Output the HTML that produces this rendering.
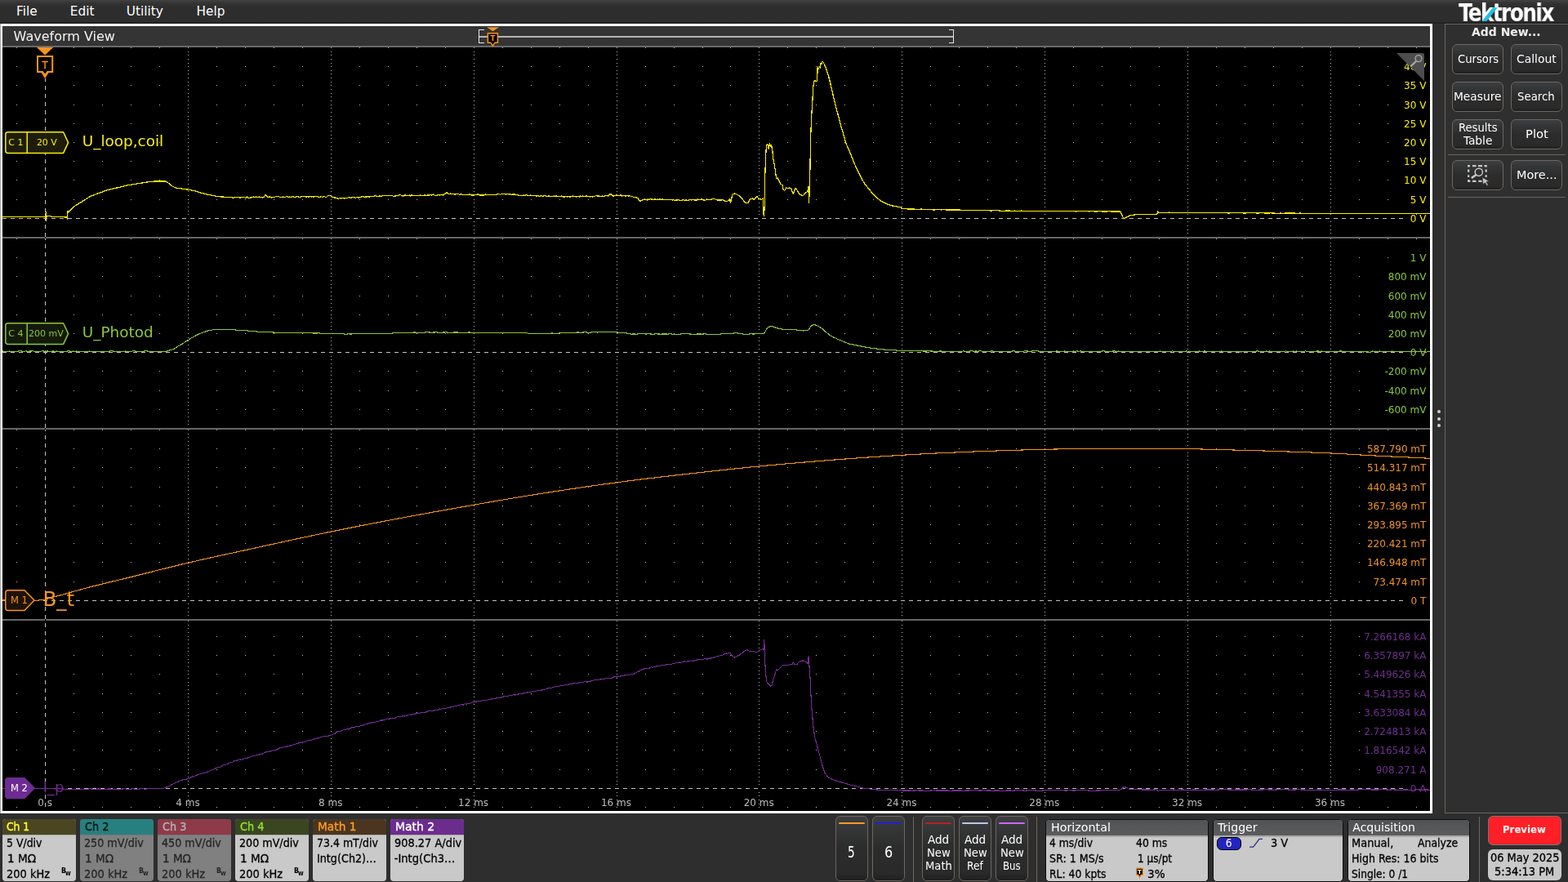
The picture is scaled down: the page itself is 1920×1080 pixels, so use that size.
<!DOCTYPE html>
<html lang="en"><head><meta charset="utf-8"><title>Waveform View</title>
<style>
*{box-sizing:border-box;margin:0;padding:0}
html,body{width:1920px;height:1080px;overflow:hidden;background:#2e2e2e}
body{position:relative;font-family:"DejaVu Sans Condensed","Liberation Sans",sans-serif;color:#fff}
span,b,i{position:absolute;white-space:nowrap;display:block;transform-origin:0 50%;font-style:normal;font-weight:400}
.dv{font-family:"DejaVu Sans","Liberation Sans",sans-serif}
.dvb{font-family:"DejaVu Sans","Liberation Sans",sans-serif;font-weight:700}
.dvcb{font-weight:700}
.lb{font-family:"Liberation Sans","DejaVu Sans",sans-serif}
.lbb{font-family:"Liberation Sans","DejaVu Sans",sans-serif;font-weight:700}
div,nav,header,section,aside,footer,main,button{position:absolute;display:block}
button{border:0;background:none;font:inherit;color:inherit}
#menubar{left:0;top:0;width:1920px;height:29px;background:linear-gradient(#424242 0,#333 4px,#2d2d2d 9px,#2d2d2d 27px,#1c1c1c 28px,#242424 29px)}
#wv{left:0;top:29px;width:1754px;height:967px;border:3px solid #fff;border-left-color:#f4f4f4;background:#000}
#wv:before{content:"";position:absolute;left:-3px;top:-3px;width:1px;height:967px;background:#ababab}
#wvtitle{left:0;top:0;width:1748px;height:26px;background:#343434;border-bottom:2px solid #686a6d}
#plot{left:0;top:0}
#side{left:1769px;top:29px;width:152px;height:967px;border:1px solid #6a6460;background:#2f2f2f}
.btn{border:1px solid #6d6660;border-radius:6px;background:linear-gradient(#3d3e40 0,#343536 22%,#2c2c2c 50%,#2a2a2a 88%,#1f1f1f 100%)}
.sep{background:#6d6660}
#bottom{left:0;top:996px;width:1920px;height:84px;background:#2e2e2e}
  .badge{border-radius:4px;overflow:hidden;background:#c9c9c9}
.badge.off{background:#808080}
.badge header{left:0;top:0;width:100%;height:20px;border-bottom:1px solid #a9a9a9}
.badge.off header{border-bottom-color:#777}
.sys{border:1px solid #0c0c0c;border-radius:5px;overflow:hidden;background:#c9c9c9}
.sys header{left:0;top:0;width:100%;height:21px;background:linear-gradient(#515254,#5b5c5e);border-bottom:2px solid #a9a9a9}
.bar{height:2px;left:3px;right:3px;top:7px;border-radius:1px}
.gs{left:0;top:0;width:100%;height:100%;will-change:transform}
</style></head>
<body>
<nav id="menubar">
<span class="dv" style="left:20px;top:5px;font-size:15.3px;line-height:18px;color:#fff;">File</span>
<span class="dv" style="left:85.8px;top:5px;font-size:15.3px;line-height:18px;color:#fff;">Edit</span>
<span class="dv" style="left:154.8px;top:5px;font-size:15.3px;line-height:18px;color:#fff;">Utility</span>
<span class="dv" style="left:240.6px;top:5px;font-size:15.3px;line-height:18px;color:#fff;">Help</span>
<span class="dvcb" style="left:1786.3px;top:-2px;font-size:30.4px;line-height:35px;color:#fff;transform:scaleX(0.905);letter-spacing:-1.7px;will-change:transform;">Tektronix</span>
<svg width="30" height="30" viewBox="0 0 30 30" style="position:absolute;left:1810px;top:0"><path d="M4.6 26 L18 9.2 L23.8 9.2 L10.4 26Z" fill="#1cc0e8"/></svg>
</nav>
<main id="wv"><div class="gs">
<header id="wvtitle">
<span class="dv" style="left:13.6px;top:2.9px;font-size:16px;line-height:19px;color:#f2f2f2;">Waveform View</span>
<svg width="1748" height="26" viewBox="3 32 1748 26" style="position:absolute;left:0;top:0"><g fill="none" stroke="#e8e8e8" stroke-width="1" shape-rendering="crispEdges"><path d="M592.5 36.5H586.5V52.5H592.5M1161.5 36.5H1167.5V52.5H1161.5"/></g><rect x="587" y="44" width="580" height="2" fill="#b4b4b4"/><path d="M596 33.2H611L603.5 38.2Z" fill="#f7941d"/><path d="M597.4 40.8H609.4V52.2H606L603.4 56.2L600.8 52.2H597.4Z" fill="#000" stroke="#f7941d" stroke-width="1.5"/><text x="603.4" y="50" font-family="DejaVu Sans,Liberation Sans,sans-serif" font-weight="700" font-size="8.6" fill="#f7941d" text-anchor="middle">T</text></svg>
</header>
<svg id="plot" width="1748" height="964" viewBox="3 32 1748 964" style="position:absolute;left:0;top:0;overflow:hidden" font-family="DejaVu Sans,Liberation Sans,sans-serif" font-size="12"><text x="100.8" y="179" font-size="18.4" fill="#f6ee14">U_loop,coil</text><text x="100.8" y="413" font-size="18.4" fill="#8cc63f">U_Photod</text><defs><path id="dr" d="M20 .5h1M55 .5h1M90 .5h1M125 .5h1M160 .5h1M195 .5h1M230 .5h1M265 .5h1M300 .5h1M335 .5h1M370 .5h1M405 .5h1M440 .5h1M475 .5h1M510 .5h1M545 .5h1M580 .5h1M615 .5h1M650 .5h1M685 .5h1M720 .5h1M755 .5h1M790 .5h1M825 .5h1M860 .5h1M894 .5h1M929 .5h1M964 .5h1M999 .5h1M1034 .5h1M1069 .5h1M1104 .5h1M1139 .5h1M1174 .5h1M1209 .5h1M1244 .5h1M1279 .5h1M1314 .5h1M1349 .5h1M1384 .5h1M1419 .5h1M1454 .5h1M1489 .5h1M1524 .5h1M1559 .5h1M1594 .5h1M1629 .5h1M1664 .5h1M1699 .5h1M1734 .5h1"/><path id="dc0" d="M.5 0v1M.5 5v1M.5 9v1M.5 14v1M.5 19v1M.5 23v1M.5 28v1M.5 32v1M.5 37v1M.5 42v1M.5 46v1M.5 51v1M.5 56v1M.5 60v1M.5 65v1M.5 70v1M.5 74v1M.5 79v1M.5 84v1M.5 88v1M.5 93v1M.5 97v1M.5 102v1M.5 107v1M.5 111v1M.5 116v1M.5 121v1M.5 125v1M.5 130v1M.5 135v1M.5 139v1M.5 144v1M.5 148v1M.5 153v1M.5 158v1M.5 162v1M.5 167v1M.5 172v1M.5 176v1M.5 181v1M.5 186v1M.5 190v1M.5 195v1M.5 200v1M.5 204v1M.5 209v1M.5 213v1M.5 218v1M.5 223v1M.5 227v1"/><path id="dc1" d="M.5 0v1M.5 5v1M.5 9v1M.5 14v1M.5 19v1M.5 23v1M.5 28v1M.5 32v1M.5 37v1M.5 42v1M.5 46v1M.5 51v1M.5 56v1M.5 60v1M.5 65v1M.5 70v1M.5 74v1M.5 79v1M.5 84v1M.5 88v1M.5 93v1M.5 97v1M.5 102v1M.5 107v1M.5 111v1M.5 116v1M.5 121v1M.5 125v1M.5 130v1M.5 135v1M.5 139v1M.5 144v1M.5 148v1M.5 153v1M.5 158v1M.5 162v1M.5 167v1M.5 172v1M.5 176v1M.5 181v1M.5 186v1M.5 190v1M.5 195v1M.5 200v1M.5 204v1M.5 209v1M.5 213v1M.5 218v1M.5 223v1M.5 227v1"/><path id="dc2" d="M.5 0v1M.5 5v1M.5 9v1M.5 14v1M.5 19v1M.5 23v1M.5 28v1M.5 32v1M.5 37v1M.5 42v1M.5 46v1M.5 51v1M.5 56v1M.5 60v1M.5 65v1M.5 70v1M.5 74v1M.5 79v1M.5 84v1M.5 88v1M.5 93v1M.5 97v1M.5 102v1M.5 107v1M.5 111v1M.5 116v1M.5 121v1M.5 125v1M.5 130v1M.5 135v1M.5 139v1M.5 144v1M.5 148v1M.5 153v1M.5 158v1M.5 162v1M.5 167v1M.5 172v1M.5 176v1M.5 181v1M.5 186v1M.5 190v1M.5 195v1M.5 200v1M.5 204v1M.5 209v1M.5 213v1M.5 218v1M.5 223v1M.5 227v1"/><path id="dc3" d="M.5 0v1M.5 5v1M.5 9v1M.5 14v1M.5 19v1M.5 23v1M.5 28v1M.5 33v1M.5 37v1M.5 42v1M.5 47v1M.5 51v1M.5 56v1M.5 61v1M.5 65v1M.5 70v1M.5 75v1M.5 79v1M.5 84v1M.5 89v1M.5 93v1M.5 98v1M.5 102v1M.5 107v1M.5 112v1M.5 116v1M.5 121v1M.5 126v1M.5 130v1M.5 135v1M.5 140v1M.5 144v1M.5 149v1M.5 154v1M.5 158v1M.5 163v1M.5 168v1M.5 172v1M.5 177v1M.5 182v1M.5 186v1M.5 191v1M.5 196v1M.5 200v1M.5 205v1M.5 210v1M.5 214v1M.5 219v1M.5 224v1M.5 228v1"/></defs><g stroke="#bcbcbc" stroke-width="1" fill="none" shape-rendering="crispEdges"><use href="#dr" y="58"/><use href="#dr" y="81"/><use href="#dr" y="104"/><use href="#dr" y="128"/><use href="#dr" y="151"/><use href="#dr" y="174"/><use href="#dr" y="197"/><use href="#dr" y="220"/><use href="#dr" y="244"/><use href="#dr" y="267"/><use href="#dr" y="292"/><use href="#dr" y="315"/><use href="#dr" y="338"/><use href="#dr" y="362"/><use href="#dr" y="385"/><use href="#dr" y="408"/><use href="#dr" y="431"/><use href="#dr" y="454"/><use href="#dr" y="478"/><use href="#dr" y="501"/><use href="#dr" y="526"/><use href="#dr" y="549"/><use href="#dr" y="572"/><use href="#dr" y="596"/><use href="#dr" y="619"/><use href="#dr" y="642"/><use href="#dr" y="665"/><use href="#dr" y="688"/><use href="#dr" y="712"/><use href="#dr" y="735"/><use href="#dr" y="779"/><use href="#dr" y="802"/><use href="#dr" y="825"/><use href="#dr" y="849"/><use href="#dr" y="872"/><use href="#dr" y="895"/><use href="#dr" y="918"/><use href="#dr" y="942"/><use href="#dr" y="965"/><use href="#dr" y="988"/><use href="#dc0" x="230" y="58"/><use href="#dc1" x="230" y="292"/><use href="#dc2" x="230" y="526"/><use href="#dc3" x="230" y="760"/><use href="#dc0" x="405" y="58"/><use href="#dc1" x="405" y="292"/><use href="#dc2" x="405" y="526"/><use href="#dc3" x="405" y="760"/><use href="#dc0" x="580" y="58"/><use href="#dc1" x="580" y="292"/><use href="#dc2" x="580" y="526"/><use href="#dc3" x="580" y="760"/><use href="#dc0" x="755" y="58"/><use href="#dc1" x="755" y="292"/><use href="#dc2" x="755" y="526"/><use href="#dc3" x="755" y="760"/><use href="#dc0" x="929" y="58"/><use href="#dc1" x="929" y="292"/><use href="#dc2" x="929" y="526"/><use href="#dc3" x="929" y="760"/><use href="#dc0" x="1104" y="58"/><use href="#dc1" x="1104" y="292"/><use href="#dc2" x="1104" y="526"/><use href="#dc3" x="1104" y="760"/><use href="#dc0" x="1279" y="58"/><use href="#dc1" x="1279" y="292"/><use href="#dc2" x="1279" y="526"/><use href="#dc3" x="1279" y="760"/><use href="#dc0" x="1454" y="58"/><use href="#dc1" x="1454" y="292"/><use href="#dc2" x="1454" y="526"/><use href="#dc3" x="1454" y="760"/><use href="#dc0" x="1629" y="58"/><use href="#dc1" x="1629" y="292"/><use href="#dc2" x="1629" y="526"/><use href="#dc3" x="1629" y="760"/></g><rect x="3" y="290" width="1748" height="2" fill="#666"/><rect x="3" y="524" width="1748" height="2" fill="#666"/><rect x="3" y="758" width="1748" height="2" fill="#666"/><path d="M55.5 95V993M3 267.5H1718M3 431.5H1718M3 735.5H1718M3 965.5H1718" stroke="#000" stroke-width="1" fill="none" shape-rendering="crispEdges"/><path d="M3 267.5H1718M3 431.5H1718M3 735.5H1718M3 965.5H1718" stroke="#c4c4c4" stroke-width="1" stroke-dasharray="5 5" fill="none" shape-rendering="crispEdges"/><path d="M55.5 96V100M55.5 105V110M55.5 115V120M55.5 125V130M55.5 135V140M55.5 145V150M55.5 155V160M55.5 165V170M55.5 175V180M55.5 185V190M55.5 195V200M55.5 205V210M55.5 215V220M55.5 225V230M55.5 235V240M55.5 245V250M55.5 255V260M55.5 265V270M55.5 275V280M55.5 285V290M55.5 292V294M55.5 299V304M55.5 309V314M55.5 319V324M55.5 329V334M55.5 339V344M55.5 349V354M55.5 359V364M55.5 369V374M55.5 379V384M55.5 389V394M55.5 399V404M55.5 409V414M55.5 419V424M55.5 429V434M55.5 439V444M55.5 449V454M55.5 459V464M55.5 469V474M55.5 479V484M55.5 489V494M55.5 499V504M55.5 509V514M55.5 519V524M55.5 526V528M55.5 533V538M55.5 543V548M55.5 553V558M55.5 563V568M55.5 573V578M55.5 583V588M55.5 593V598M55.5 603V608M55.5 613V618M55.5 623V628M55.5 633V638M55.5 643V648M55.5 653V658M55.5 663V668M55.5 673V678M55.5 683V688M55.5 693V698M55.5 703V708M55.5 713V718M55.5 723V728M55.5 733V738M55.5 743V748M55.5 753V758M55.5 763V768M55.5 773V778M55.5 783V788M55.5 793V798M55.5 803V808M55.5 813V818M55.5 823V828M55.5 833V838M55.5 843V848M55.5 853V858M55.5 863V868M55.5 873V878M55.5 883V888M55.5 893V898M55.5 903V908M55.5 913V918M55.5 923V928M55.5 933V938M55.5 943V948M55.5 953V958M55.5 963V968M55.5 973V978M55.5 983V988" stroke="#c4c4c4" stroke-width="1" fill="none" shape-rendering="crispEdges"/><text x="52.4" y="742" font-size="24.6" fill="#f7941d">B_t</text><text x="52.8" y="970" font-size="18" fill="#6d2a90">I_p</text><path fill="#000" d="M1715.11 74H1751V89H1715.11ZM1715.11 97H1751V112H1715.11ZM1715.11 121H1751V136H1715.11ZM1715.11 144H1751V159H1715.11ZM1715.11 167H1751V182H1715.11ZM1715.11 190H1751V205H1715.11ZM1715.11 213H1751V228H1715.11ZM1722.74 237H1751V252H1722.74ZM1722.74 260H1751V275H1722.74Z"/><g fill="#f6ee14" text-anchor="end"><text x="1746.4" y="85.9">40 V</text><text x="1746.4" y="108.9">35 V</text><text x="1746.4" y="132.9">30 V</text><text x="1746.4" y="155.9">25 V</text><text x="1746.4" y="178.9">20 V</text><text x="1746.4" y="201.9">15 V</text><text x="1746.4" y="224.9">10 V</text><text x="1746.4" y="248.9">5 V</text><text x="1746.4" y="271.9">0 V</text></g><path fill="#000" d="M1722.74 308H1751V323H1722.74ZM1695.78 331H1751V346H1695.78ZM1695.78 355H1751V370H1695.78ZM1695.78 378H1751V393H1695.78ZM1695.78 401H1751V416H1695.78ZM1722.74 424H1751V439H1722.74ZM1691.45 447H1751V462H1691.45ZM1691.45 471H1751V486H1691.45ZM1691.45 494H1751V509H1691.45Z"/><g fill="#8cc63f" text-anchor="end"><text x="1746.4" y="319.9">1 V</text><text x="1746.4" y="342.9">800 mV</text><text x="1746.4" y="366.9">600 mV</text><text x="1746.4" y="389.9">400 mV</text><text x="1746.4" y="412.9">200 mV</text><text x="1746.4" y="435.9">0 V</text><text x="1746.4" y="458.9">-200 mV</text><text x="1746.4" y="482.9">-400 mV</text><text x="1746.4" y="505.9">-600 mV</text></g><path fill="#000" d="M1669.94 542H1751V557H1669.94ZM1669.94 565H1751V580H1669.94ZM1669.94 589H1751V604H1669.94ZM1669.94 612H1751V627H1669.94ZM1669.94 635H1751V650H1669.94ZM1669.94 658H1751V673H1669.94ZM1669.94 681H1751V696H1669.94ZM1677.57 705H1751V720H1677.57ZM1723.62 728H1751V743H1723.62Z"/><g fill="#ee9226" text-anchor="end"><text x="1746.4" y="553.9">587.790 mT</text><text x="1746.4" y="576.9">514.317 mT</text><text x="1746.4" y="600.9">440.843 mT</text><text x="1746.4" y="623.9">367.369 mT</text><text x="1746.4" y="646.9">293.895 mT</text><text x="1746.4" y="669.9">220.421 mT</text><text x="1746.4" y="692.9">146.948 mT</text><text x="1746.4" y="716.9">73.474 mT</text><text x="1746.4" y="739.9">0 T</text></g><path fill="#000" d="M1666.17 772H1751V787H1666.17ZM1666.17 795H1751V810H1666.17ZM1666.17 818H1751V833H1666.17ZM1666.17 842H1751V857H1666.17ZM1666.17 865H1751V880H1666.17ZM1666.17 888H1751V903H1666.17ZM1666.17 911H1751V926H1666.17ZM1680.75 935H1751V950H1680.75ZM1722.74 958H1751V973H1722.74Z"/><g fill="#6f2f8f" text-anchor="end"><text x="1746.4" y="783.9">7.266168 kA</text><text x="1746.4" y="806.9">6.357897 kA</text><text x="1746.4" y="829.9">5.449626 kA</text><text x="1746.4" y="853.9">4.541355 kA</text><text x="1746.4" y="876.9">3.633084 kA</text><text x="1746.4" y="899.9">2.724813 kA</text><text x="1746.4" y="922.9">1.816542 kA</text><text x="1746.4" y="946.9">908.271 A</text><text x="1746.4" y="969.9">0 A</text></g><g fill="#bcbcbc" text-anchor="middle"><text x="55.2" y="987">0 s</text><text x="230" y="987">4 ms</text><text x="404.8" y="987">8 ms</text><text x="579.6" y="987">12 ms</text><text x="754.4" y="987">16 ms</text><text x="929.2" y="987">20 ms</text><text x="1104" y="987">24 ms</text><text x="1278.8" y="987">28 ms</text><text x="1453.6" y="987">32 ms</text><text x="1628.4" y="987">36 ms</text></g><path d="M3 735L9.4 735.1L15.9 735.2L22.3 735.3L28.7 735.4L35.1 735.5L41.6 735.3L48 735L55 734L66.7 730.8L73.4 729L80 727.1L86.7 725.2L93.4 723.4L100 721.6L106.7 719.8L113.2 718.1L119.6 716.5L126.1 714.9L132.5 713.3L139 711.7L145.4 710.2L151.9 708.6L158.3 707L164.8 705.4L171.3 703.8L177.9 702.1L184.4 700.5L190.9 698.8L197.4 697.2L203.9 695.6L210.4 694L217 692.4L223.5 690.8L230 689.3L236.2 687.9L242.4 686.4L248.6 685L254.9 683.6L261.1 682.2L267.3 680.8L273.5 679.5L279.7 678.1L285.9 676.8L292.1 675.4L298.4 674.1L304.6 672.7L310.8 671.4L317 670L323.3 668.6L329.7 667.2L336 665.9L342.3 664.5L348.7 663.1L355 661.7L361.4 660.3L367.7 659L374 657.6L380.4 656.3L386.7 654.9L393 653.6L399.4 652.3L405.7 651L411.9 649.7L418.2 648.5L424.4 647.2L430.6 646L436.9 644.8L443.1 643.5L449.4 642.3L455.6 641.1L461.8 639.9L468.1 638.7L474.3 637.5L480.5 636.3L486.8 635.2L493 634L499.2 632.8L505.4 631.7L511.6 630.5L517.9 629.4L524.1 628.3L530.3 627.1L536.5 626L542.7 624.9L548.9 623.8L555.1 622.7L561.4 621.6L567.6 620.5L573.8 619.4L580 618.3L586 617.2L592 616.2L598 615.1L604 614.1L610 613L616 612L622 611L628 610L634 609L640 608L646.1 607L652.2 606.1L658.3 605.1L664.4 604.1L670.4 603.2L676.5 602.2L682.6 601.3L688.7 600.4L694.8 599.4L700.9 598.5L707 597.6L713.1 596.7L719.2 595.8L725.3 594.9L731.3 594.1L737.4 593.2L743.5 592.4L749.6 591.5L755.7 590.7L761.9 589.9L768 589.1L774.2 588.3L780.4 587.5L786.5 586.8L792.7 586L798.9 585.3L805 584.5L811.2 583.8L817.3 583.1L823.5 582.4L829.7 581.7L835.8 581L842 580.3L848.2 579.6L854.5 578.9L860.7 578.2L866.9 577.5L873.2 576.8L879.4 576.1L885.6 575.5L891.9 574.8L898.1 574.1L904.4 573.5L910.6 572.9L916.8 572.2L923.1 571.6L929.3 571L935.5 570.4L941.7 569.8L947.9 569.3L954.1 568.7L960.3 568.1L966.5 567.6L972.6 567.1L978.8 566.5L985 566L991.2 565.5L997.4 565L1003.6 564.5L1009.8 564L1016 563.5L1022.3 563L1028.6 562.5L1034.9 562L1041.2 561.6L1047.5 561.1L1053.8 560.6L1060.2 560.2L1066.5 559.8L1072.8 559.3L1079.1 558.9L1085.4 558.5L1091.7 558.1L1098 557.7L1104.3 557.3L1110.6 556.9L1116.8 556.6L1123.1 556.2L1129.4 555.9L1135.6 555.6L1141.9 555.2L1148.2 554.9L1154.4 554.6L1160.7 554.3L1166.9 554.1L1173.2 553.8L1179.5 553.5L1185.7 553.3L1192 553L1198.3 552.8L1204.6 552.5L1210.9 552.3L1217.1 552.1L1223.4 551.9L1229.7 551.7L1236 551.5L1242.3 551.3L1248.6 551.1L1254.9 550.9L1261.1 550.8L1267.4 550.6L1273.7 550.5L1280 550.3L1286 550.2L1292 550L1298 549.9L1304 549.8L1310 549.7L1316 549.6L1322 549.5L1328.4 549.4L1334.8 549.4L1341.2 549.3L1347.6 549.3L1354 549.2L1360.4 549.2L1366.8 549.2L1373.2 549.2L1379.6 549.2L1386 549.2L1392.4 549.2L1398.8 549.2L1405.2 549.2L1411.6 549.3L1418 549.3L1424.4 549.3L1430.8 549.4L1437.2 549.4L1443.6 549.5L1450 549.6L1456 549.7L1462 549.8L1468 549.9L1474 550.1L1480 550.2L1486 550.4L1492 550.5L1498 550.7L1504 550.8L1510 551L1516.2 551.2L1522.3 551.3L1528.5 551.5L1534.7 551.6L1540.8 551.8L1547 552L1553 552.2L1559 552.4L1565 552.6L1571 552.8L1577 553L1583.6 553.2L1590.2 553.5L1596.9 553.7L1603.5 553.9L1610.1 554.2L1616.8 554.4L1623.4 554.7L1630 555L1636 555.3L1642 555.6L1648 555.9L1654 556.3L1660 556.6L1666 557L1672 557.3L1678 557.6L1684 558L1690 558.3L1696.1 558.6L1702.2 558.9L1708.3 559.2L1714.4 559.5L1720.5 559.8L1726.6 560.1L1732.7 560.4L1738.8 560.7L1744.9 561L1751 561.3" stroke="#f7941d" stroke-width="1.1" fill="none" stroke-linejoin="round" shape-rendering="crispEdges"/><path d="M3 965.5L6.1 965.5L9.1 965.5L12.2 965.5L15.2 965.5L18.3 965.5L21.4 965.5L24.4 965.5L27.5 965.5L30.5 965.5L33.6 965.5L36.6 965.5L39.7 965.5L42.8 965.5L45.8 965.5L48.9 965.5L51.9 965.5L55 965.5L58.2 965.3L61.4 965.4L64.7 965.7L67.9 966L71.1 965.7L74.3 965.8L77.6 966L80.8 966.4L84 966.1L87 966.4L90 966.4L93 966.1L96 966.3L99 966.2L102 966.2L105 966.5L108 966L111 965.9L114 966.5L117 966.2L120 966L123 966.1L126 966.1L129 966.4L132 966L135 966L138 966.2L141 966.1L144 966.3L147 966.3L150 966L153 965.8L156 966.2L159 966.3L162 965.7L165 966.1L168 966.2L171 966L174 965.7L177 966.1L180 966L183 965.7L186 965.9L189 965.7L192 965.5L195 965.7L200 965.6L201.6 964.6L203.2 964L204.8 963.9L206.4 962.7L208 962.2L209.7 960.6L211.5 960.1L213.2 959.6L215 958.3L216.7 957.8L218.2 957.3L219.7 956.2L221.2 955.4L222.7 955.8L224.2 954.6L225.8 954L227.3 954.4L228.8 954L230.3 953.6L231.8 953.3L233.3 952L234.8 951.3L236.3 950.8L237.9 951.2L239.4 949.8L240.9 949.3L242.4 948.6L243.9 948.1L245.4 947.6L247 947.4L248.5 946.7L250 946.3L251.5 946.4L253 945L254.6 945.1L256.1 944.4L257.6 943.6L259.1 943L260.6 942.7L262.1 941.9L263.7 940.9L265.2 940.4L266.7 939.7L268.3 939.2L270 939.2L271.6 938L273.2 936.9L274.9 936.7L276.5 936.4L278.1 935.4L279.7 935L281.4 933.7L283 933L284.5 933.2L286.1 932.1L287.6 931.9L289.2 931.6L290.7 930.9L292.3 930.3L293.8 929.8L295.4 930.4L296.9 929.6L298.5 929.5L300 928.5L301.5 928.6L303.1 928.1L304.6 927.4L306.2 926.9L307.7 926.5L309.2 925.8L310.8 925.6L312.3 925.5L313.8 924.6L315.4 924.9L316.9 924.1L318.5 923.8L320 923.7L321.6 922.9L323.2 921.8L324.9 921.4L326.5 920.6L328.1 920.1L329.8 920.6L331.4 919.6L333 919.5L334.5 918.9L336 918L337.5 918.3L339 917.8L340.5 916.9L342 916.1L343.5 915.9L345 915.4L346.5 915.2L348 914.4L349.5 914.7L351 914.6L352.5 913.4L354 913.6L355.5 913L357 912.4L358.5 912.5L360 911.5L361.5 911.6L363 910.3L364.5 910.9L366 909.7L367.5 909L369.1 909.6L370.6 909L372.2 908.6L373.7 908.2L375.3 907.4L376.8 906.7L378.4 906.5L379.9 906.8L381.5 906.4L383 905.2L384.5 905L386.1 904.6L387.6 904.7L389.2 903.3L390.7 903.8L392.3 902.8L393.8 902.7L395.4 901.8L396.9 901.4L398.5 901.8L400 901L401.8 901.2L403.5 900.8L405.2 900.4L407 899.3L408.5 898.9L410 898.4L411.5 897L413 895.5L414.5 895.3L416 895.8L417.5 895.4L419 894.2L420.5 893.9L422 893.9L423.5 893.3L425 892.5L426.5 893L428 892.2L429.5 891.6L431 890.8L432.5 891L434 890.8L435.5 889.8L437 889.3L438.5 889.6L440 889.5L441.6 888.5L443.1 888.2L444.7 888L446.3 887.4L447.9 886.6L449.4 886.4L451 885.9L452.6 885.5L454.1 885L455.7 884.9L457.3 884.4L458.8 884.7L460.4 883.7L462 884L463.6 883.4L465.1 882.4L466.7 881.9L468.2 882.1L469.7 881.7L471.2 881.4L472.8 880.7L474.3 880.8L475.8 880.8L477.3 880.1L478.8 879.6L480.3 880L481.8 879L483.3 879.5L484.9 878.9L486.4 877.8L487.9 878L489.4 877.4L490.9 877.7L492.4 877L493.9 876.4L495.4 877L496.9 876.5L498.5 876L500 875.7L501.5 874.8L503 875.5L504.5 874.5L506.1 874.5L507.6 874.2L509.2 873.9L510.7 873.1L512.2 873.8L513.8 873L515.3 872.6L516.9 872.9L518.4 872.6L520 872.2L521.5 872.1L523 871.2L524.6 870.7L526.1 870.6L527.7 870.6L529.2 870.6L530.8 870.2L532.3 869.8L533.8 869.5L535.4 869.3L536.9 868.9L538.5 868L540 868.4L541.5 867.7L543.1 867.2L544.6 867.5L546.2 867.4L547.7 866.5L549.2 866.6L550.8 866.2L552.3 865.9L553.8 865.8L555.4 865.3L556.9 864.3L558.5 864.6L560 864L561.5 863.7L563.1 863.7L564.6 862.8L566.2 863L567.7 863L569.2 861.8L570.8 862.3L572.3 861.8L573.8 861.2L575.4 861.3L576.9 860.2L578.5 859.9L580 860.5L581.5 859.9L583 859.1L584.5 858.8L586 858.8L587.5 858.7L589 858.9L590.5 857.7L592 857.9L593.5 857.5L595 857.3L596.5 857.5L598 856.3L599.5 856.8L601 856.4L602.5 855.6L604 855.2L605.5 855.6L607 855.4L608.5 854.6L610 854.1L611.5 854.3L613 854.2L614.5 853.5L616 853.3L617.5 852.7L619 852.5L620.5 852.3L622 852.7L623.5 851.7L625 851.5L626.5 851.5L628 851L629.5 850.8L631 851.1L632.5 850.2L634 850.3L635.5 849.5L637 849.7L638.5 849.7L640 849.1L641.5 848.6L643 848.1L644.5 848.1L646.1 847.9L647.6 847.3L649.1 847.3L650.6 847.1L652.1 846.3L653.6 846.7L655.2 846.7L656.7 846.1L658.2 845.5L659.7 845.7L661.2 845.5L662.7 845.2L664.2 844.9L665.8 844.4L667.3 844.3L668.8 843.8L670.3 843L671.8 842.5L673.3 842.6L674.8 842.5L676.4 841.7L677.9 841.5L679.4 840.9L680.9 840.6L682.4 840.5L683.9 840.9L685.5 839.7L687 839.5L688.5 839.5L690 839.8L691.5 838.7L693 838.3L694.5 838.1L696 838.2L697.5 837.6L699 838L700.5 837.1L702 837L703.5 836.7L705 836.6L706.5 836.2L708 836.1L709.5 835.8L711 835.6L712.5 835.8L714 835.3L715.5 834.9L717 834.4L718.5 835.1L720 834.9L721.6 834.7L723.1 834.2L724.7 833.6L726.3 833.3L727.9 832.8L729.4 832.8L731 832.6L732.6 832.9L734.1 831.8L735.7 832.1L737.3 831.8L738.8 831.5L740.4 831.2L742 830.3L743.6 830.1L745.1 830.3L746.7 830.1L748.4 830.3L750 829.8L751.7 828.9L753.4 828.6L755 829.1L756.7 828L758.3 828.7L760 827.5L761.6 827.9L763.2 827.9L764.9 826.8L766.5 826.6L768.1 826.9L769.8 826.7L771.4 825.7L773 826L774.8 825.7L776.5 825.1L778.2 824L780 823L781.7 822.6L783.4 821.4L785 820.3L786.7 819.4L788.2 819.1L789.8 818.7L791.3 818.5L792.9 818.2L794.4 818.2L796 817.9L797.5 816.8L799.1 817.4L800.6 816.5L802.2 816.4L803.7 815.9L805.3 815.7L806.8 815.5L808.4 815.3L809.9 814.6L811.5 814.6L813 814.5L814.5 814.1L816 814L817.5 813.3L819 813.6L820.5 813.7L822 813.3L823.5 812.8L825 812.8L826.5 812.1L828 811.6L829.5 811.9L831 811.2L832.5 811L834 811.3L835.5 810.8L837 810.1L838.5 809.9L840 810.3L841.5 809.9L843.1 810L844.6 809.6L846.2 808.9L847.7 809.1L849.2 809.1L850.8 808.9L852.3 808.7L853.8 807.7L855.4 807.6L856.9 807.3L858.5 807.8L860 807.4L861.5 807.2L863.1 806.7L864.7 806.9L866.2 807.1L868 805.9L869.7 806.3L871.5 805.6L873.2 805.3L875 804.9L876.7 804.1L878.3 803.4L880 803.2L881.7 802.9L883.3 802.7L885 802L886.9 800.9L888.8 800L890.7 800.1L892.5 799.1L894.4 799.8L896.2 802.7L897.8 803.8L899.4 805.1L901.3 804.5L903.1 803.3L905 802.3L906.7 800.8L908.3 799.9L910 798.3L912.2 796.9L914.4 795.8L916 796.1L917.5 797.4L919.2 797.1L920.8 797.7L922.5 797.2L924.7 798.3L926.9 798.5L928.5 797.6L930 796.5L931.9 795.6L933.8 794.6L935 796L935.4 783.6L935.7 783.1L936.2 795L936.9 813.1L937.8 826.2L938.8 835L941.2 837.5L943.1 840.2L945 839.4L946.9 832.5L948.8 826.2L950.6 820L952.5 820.6L955 818.1L958.8 814.4L962.5 814.8L966.2 814L970.6 813.1L971.2 810.6L973.1 814L976.2 813.1L978.8 810L983.1 808.8L986.2 810.2L989.4 812.5L990.2 803.1L990.5 803.1L991 816.2L991.9 827.5L992.8 848.1L993.8 866.2L995 880L996.2 892.5L998.1 904.4L1001.7 916.7L1006.7 936.7L1010 946.7L1015 952.7L1023.3 956L1040 960.7L1056.7 965L1073.3 967L1106.7 968L1111.9 968L1117.1 968.1L1122.2 967.9L1127.4 968L1132.6 968.1L1137.8 968.1L1143 967.9L1148.2 968L1153.3 968L1158.5 968L1163.7 968.1L1168.9 968L1174.1 968L1179.3 968.1L1184.5 968L1189.6 967.9L1194.8 967.9L1200 968L1205 967.9L1210 968L1215 968.1L1220 968L1225 968.1L1230 968.1L1235 968L1240 968.1L1245 967.9L1250 967.9L1255 968.1L1260 967.9L1265 967.9L1270 968.1L1275 968.1L1280 967.9L1285 967.9L1290 967.9L1295 967.9L1300 967.9L1305 968L1310 967.9L1315 968L1320 967.9L1325 967.9L1330 967.9L1335 968.1L1340 968.1L1345 968L1350 967.9L1355 967.9L1360 967.9L1365 967.9L1370 967.9L1373 966.4L1376 963.2L1380 964.4L1383 966.7L1388.7 966.8L1394.3 966.9L1400 967L1405.3 967L1410.7 967.1L1416 966.9L1418 968.4L1421 967.2L1426.3 967.2L1431.5 967.3L1436.8 967L1442.1 967.3L1447.3 967L1452.6 967.1L1457.9 967.1L1463.1 967L1468.4 967.2L1473.7 967.1L1478.9 967L1484.2 967L1489.5 967.1L1494.7 966.9L1500 966.9L1505 967L1510 967.1L1515.1 967L1520.1 967L1525.1 967L1530.1 966.9L1535.1 967.1L1540.2 967.1L1545.2 967L1550.2 966.9L1555.2 967L1560.2 967.1L1565.3 966.9L1570.3 966.9L1575.3 966.9L1580.3 967.1L1585.3 967L1590.4 966.9L1595.4 967L1600.4 967.1L1605.4 967.1L1610.4 967.1L1615.5 967L1620.5 967.1L1625.5 967.1L1630.5 967.1L1635.5 967.1L1640.6 967L1645.6 967L1650.6 967.1L1655.6 967L1660.6 967.1L1665.7 966.9L1670.7 966.9L1675.7 966.9L1680.7 967L1685.7 967L1690.8 966.9L1695.8 966.9L1700.8 967.1L1705.8 966.9L1710.8 967.1L1715.9 967.1L1720.9 967L1725.9 967.1L1730.9 967.1L1735.9 966.9L1741 967.1L1746 967L1751 967.1" stroke="#782d96" stroke-width="1.1" fill="none" stroke-linejoin="round" shape-rendering="crispEdges"/><path d="M3 429.9L5.2 430.5L7.4 430.4L9.6 430.3L11.9 430L14.1 430.6L16.3 430.6L18.5 430.3L20.7 430.3L22.9 430L25.1 429.8L27.3 430.2L29.6 430.4L31.8 429.8L34 430.6L36.2 430L38.4 430L40.6 429.8L42.8 430.8L45.1 430.6L47.3 430.7L49.5 430.4L51.7 429.8L53.9 430.1L56.1 430.3L58.3 429.9L60.6 430.8L62.8 430.2L65 429.9L67.2 430.6L69.4 429.9L71.6 430.8L73.8 430.2L76 430.4L78.3 430.1L80.5 430.3L82.7 430L84.9 429.8L87.1 430.7L89.3 430L91.5 430.6L93.8 430L96 430.8L98.2 430.7L100.4 430.6L102.6 430.6L104.8 430.4L107 430.6L109.2 429.9L111.5 430.3L113.7 430.7L115.9 430L118.1 430.8L120.3 430.7L122.5 430.2L124.7 430.2L127 430.2L129.2 430.2L131.4 430.8L133.6 430.2L135.8 429.8L138 429.9L140.2 430.5L142.4 430.8L144.7 430.3L146.9 430.3L149.1 430.4L151.3 430.6L153.5 430L155.7 430.4L157.9 430.4L160.2 430.4L162.4 429.9L164.6 429.9L166.8 430.1L169 430.8L171.2 430.1L173.4 430.4L175.7 430.1L177.9 429.9L180.1 429.8L182.3 430.6L184.5 430.6L186.7 430.2L188.9 430.5L191.1 430.5L193.4 430.7L195.6 430.8L197.8 430.2L200 430.8L205 429.9L209 428.5L213 427.5L217 424.8L221 422.3L224 420.6L227 418.4L230 416.7L234 414L238 412L241.5 410L245 408.3L248.3 407.3L251.7 406L255 404.9L258.3 404.3L261.7 403.7L265 403.6L268.3 403.5L271.7 403.4L275 403.4L278.3 403.7L281.7 403.6L285 403.8L288 403.9L291 404.3L294 404.3L297 404.6L300 404.8L303 404.9L306 405.4L309 405.4L312 405.8L315 406.1L318 406.3L321.4 406.3L324.8 406.7L328.2 406.9L331.6 406.9L335 407L338.1 407.3L341.2 407.1L344.3 407.5L347.4 407.4L350.5 407.4L353.6 407.4L356.7 407.6L359.8 407.7L362.9 407.6L366 407.6L369 407.8L372.1 407.7L375.2 407.9L378.3 407.9L381.4 407.9L384.5 408L387.6 408L390.7 407.9L393.8 408.3L396.9 408.1L400 408.2L403.3 408.3L406.7 408.7L410 408.8L413.3 408.8L416.7 408.9L420 408.9L423.1 409.2L426.2 408.9L429.4 409L432.5 408.9L435.6 408.8L438.8 408.8L441.9 408.7L445 408.6L448.1 408.8L451.2 408.8L454.4 408.7L457.5 408.4L460.6 408.6L463.8 408.2L466.9 408.3L470 408.4L473.1 408.4L476.2 408.1L479.2 408.1L482.3 407.9L485.4 407.8L488.5 407.7L491.5 407.8L494.6 407.6L497.7 407.4L500.8 407.4L503.8 407.3L506.9 407L510 407.1L513.1 407.1L516.2 407.1L519.3 407.2L522.4 406.8L525.5 407L528.6 407.1L531.7 407L534.8 406.9L537.9 407.2L541 407.1L544 407L547.1 406.9L550.2 407.3L553.3 407.1L556.4 407L559.5 407L562.6 407.1L565.7 407.3L568.8 407.1L571.9 407.1L575 407L578.1 407.2L581.2 407.1L584.3 407.2L587.4 407.4L590.5 407.5L593.6 407.4L596.7 407.1L599.8 407.3L602.9 407.5L606 407.2L609 407.3L612.1 407.4L615.2 407.4L618.3 407.6L621.4 407.6L624.5 407.5L627.6 407.4L630.7 407.4L633.8 407.5L636.9 407.4L640 407.7L643.3 407.6L646.7 408.1L650 408.2L653.3 408.2L656.7 408.5L660 408.7L663.1 408.4L666.2 408.5L669.4 408.2L672.5 408.4L675.6 408L678.7 408.2L681.8 408.2L684.9 408L688.1 407.7L691.2 407.7L694.3 407.5L697.4 407.4L700.5 407.5L703.6 407.4L706.8 407L709.9 407.1L713 407.1L716.1 406.8L719.2 407.1L722.2 407.1L725.3 406.9L728.4 406.8L731.5 407L734.5 406.8L737.6 406.7L740.7 406.7L743.8 406.6L746.8 406.9L749.9 406.7L753 406.8L756 407L759 407.3L762 407.2L765 407.5L769 408.4L773 409.1L776 409L779 409.1L782 408.9L785 408.9L788 408.8L791 409L794 408.9L797 409L800 409.2L803 408.9L806 409L809 409.1L812 409L815 409L818 409.1L821 408.8L824 409.2L827 409.1L830 409.1L833 409.1L836 408.8L839 408.8L842 408.9L845 409L848 409.2L851 409.2L854 409L857 409L860 409.1L863 408.9L866 409.2L869 409.2L872 409.1L875 409.2L878 409.1L881 409.1L884 408.9L887 408.9L890 408.9L893 408.8L896.5 408.5L900 407.6L903.3 408L906.7 408.7L910 409.1L913.1 409.2L916.2 409.1L919.4 408.9L922.5 409L925.6 408.9L928.8 408.8L931.9 408.9L935 408.6L937 406L940 400.9L944 399.5L948 400.4L951.7 401.8L955 402.7L958.4 403.1L961.7 403.6L965.6 403.6L969.4 403.6L973.3 403.6L976.6 404.2L980 404.8L983.3 405L986.7 404.7L990 404.1L993.3 399L996.7 397.4L1001.7 399.3L1006.7 402.5L1010 405.4L1013.3 408.3L1016.6 410.7L1020 412.7L1023.3 414.2L1026.7 415.8L1030 417.1L1033.3 418.6L1036.7 419.9L1040 421.1L1043.3 421.7L1046.7 422.4L1050 423.1L1053.3 423.8L1056.7 424.4L1060 425.1L1063.3 425.8L1066.7 426.2L1070 426.6L1073.3 427L1076.7 427.4L1080 427.5L1083.3 428.2L1086.6 428.3L1090 428.4L1093.3 428.5L1096.6 428.9L1100 429.3L1103.3 429.2L1106.4 429.3L1109.4 429.4L1112.5 429.3L1115.5 429.5L1118.6 429.8L1121.7 429.7L1124.7 429.8L1127.8 429.7L1130.8 430L1133.9 430L1136.9 429.8L1140 430L1143 430.1L1146 430.1L1149 430.1L1152 430L1155 430.2L1158 430.1L1161 430.3L1164 430.2L1167 430.4L1170 430.3L1173 430.2L1175.2 430.8L1177.4 430.8L1179.6 429.8L1181.8 430.4L1184 430.2L1186.2 430.3L1188.4 429.9L1190.6 429.9L1192.9 430.2L1195.1 430L1197.3 430.3L1199.5 429.7L1201.7 429.8L1203.9 430.6L1206.1 430.2L1208.3 430.3L1210.5 430.6L1212.7 430.1L1214.9 429.8L1217.1 430.7L1219.3 430.4L1221.5 430.5L1223.7 430.5L1225.9 430.9L1228.2 430.2L1230.4 430.6L1232.6 430.2L1234.8 430.4L1237 430.5L1239.2 430.1L1241.4 429.8L1243.6 430.3L1245.8 430.6L1248 430.4L1250.2 430.3L1252.4 430.5L1254.6 429.9L1256.8 429.9L1259 430.1L1261.2 430.7L1263.5 430L1265.7 429.9L1267.9 429.9L1270.1 429.8L1272.3 430.1L1274.5 430.4L1276.7 430.7L1278.9 430.1L1281.1 430.2L1283.3 430.1L1285.5 430.1L1287.7 430.7L1289.9 430.4L1292.1 430.1L1294.3 429.9L1296.5 430.7L1298.7 430.6L1301 430.7L1303.2 430L1305.4 430.4L1307.6 430.8L1309.8 430.5L1312 430.9L1314.2 429.9L1316.4 430.9L1318.6 429.8L1320.8 430.3L1323 429.8L1325.2 430.7L1327.4 430.6L1329.6 430.9L1331.8 430.7L1334 430.9L1336.3 430.4L1338.5 430.9L1340.7 430.7L1342.9 430.2L1345.1 430.9L1347.3 430.2L1349.5 430L1351.7 429.9L1353.9 430.3L1356.1 430L1358.3 430.9L1360.5 430.9L1362.7 430L1364.9 429.9L1367.1 430.4L1369.3 430L1371.5 430.4L1373.8 430.7L1376 430.1L1378.2 430.3L1380.4 430.9L1382.6 430.3L1384.8 430.2L1387 430.8L1389.2 430.8L1391.4 430.8L1393.6 430.6L1395.8 430.3L1398 430.6L1400.2 430.8L1402.4 430.5L1404.6 430.1L1406.8 430.1L1409.1 430.3L1411.3 430.7L1413.5 430.5L1415.7 430.4L1417.9 430.8L1420.1 429.9L1422.3 430.5L1424.5 430.2L1426.7 430.5L1428.9 430.8L1431.1 430.1L1433.3 430.9L1435.5 429.9L1437.7 430.5L1439.9 430.4L1442.1 430.1L1444.4 430.5L1446.6 430.4L1448.8 430.3L1451 430.7L1453.2 429.8L1455.4 430.3L1457.6 430.7L1459.8 430L1462 430.8L1464.2 430L1466.4 430.6L1468.6 430L1470.8 430.3L1473 430.3L1475.2 429.9L1477.4 430.6L1479.6 430.4L1481.9 430.6L1484.1 430.5L1486.3 430.5L1488.5 430.4L1490.7 430.2L1492.9 430.9L1495.1 429.9L1497.3 430.9L1499.5 430.8L1501.7 430.4L1503.9 430.7L1506.1 430.6L1508.3 430.5L1510.5 430.2L1512.7 430.2L1514.9 430.2L1517.2 430.2L1519.4 431L1521.6 430.2L1523.8 430.3L1526 430.3L1528.2 430.8L1530.4 430.4L1532.6 430.5L1534.8 430.1L1537 430.2L1539.2 429.9L1541.4 430.1L1543.6 430.1L1545.8 430.9L1548 430.4L1550.2 430L1552.5 430.4L1554.7 430L1556.9 430.5L1559.1 430.4L1561.3 430.9L1563.5 430.1L1565.7 430.9L1567.9 430.1L1570.1 431L1572.3 430.6L1574.5 429.9L1576.7 430.8L1578.9 430.2L1581.1 430.3L1583.3 430L1585.5 430.8L1587.7 430L1590 430.7L1592.2 430.3L1594.4 430.7L1596.6 430.2L1598.8 429.9L1601 430.9L1603.2 430.6L1605.4 430.1L1607.6 431L1609.8 430.9L1612 430.1L1614.2 429.9L1616.4 430.6L1618.6 430L1620.8 430.7L1623 430.4L1625.3 430.7L1627.5 430.5L1629.7 430.8L1631.9 430.8L1634.1 430.6L1636.3 430.6L1638.5 430.3L1640.7 430L1642.9 430L1645.1 430.9L1647.3 430.1L1649.5 430.4L1651.7 430.2L1653.9 430.6L1656.1 430.5L1658.3 430.9L1660.5 430.4L1662.8 430.3L1665 430.7L1667.2 430.8L1669.4 431L1671.6 430.2L1673.8 430.9L1676 431.1L1678.2 431.1L1680.4 430L1682.6 430.3L1684.8 430.8L1687 430.9L1689.2 429.9L1691.4 430.4L1693.6 430.7L1695.8 430.8L1698.1 430.5L1700.3 430.1L1702.5 430.4L1704.7 430L1706.9 430.3L1709.1 430.4L1711.3 430.9L1713.5 430.6L1715.7 430.4L1717.9 430.2L1720.1 430.3L1722.3 430.7L1724.5 430.4L1726.7 430.1L1728.9 430.9L1731.1 430.6L1733.4 431.1L1735.6 430.5L1737.8 430.6L1740 430.4L1742.2 430.6L1744.4 431L1746.6 431.1L1748.8 430.7L1751 430.4" stroke="#8cc63f" stroke-width="1.1" fill="none" stroke-linejoin="round" shape-rendering="crispEdges"/><path d="M3 265.5L55.6 265.5L56.2 260L56.4 270.6L57 265L58.7 264.4L62.5 264.6L63 265.8L81.9 265.9L82.6 268.7L83 258L84.4 259.5L86.2 257.5L91.2 252.5L96.2 249.4L102.5 245.6L110 240.6L120 236.9L131.2 232.8L143.8 229.8L156.2 226.9L168.8 224.8L181.2 222.8L190 221.9L202.5 221.9L205 223.1L210 227.5L215 230L222.5 231L230 232.2L238.8 233.8L250 237.3L266.7 240.7L283 241.7L284.3 241.8L285.6 242.3L287 241.6L288.3 241.7L289.6 241.8L290.9 241.2L292.2 241.7L293.6 241.9L294.9 242.1L296.2 241.1L297.5 241.4L298.9 241.1L300.2 242.2L301.5 242L302.8 241L304.1 242.4L305.5 242.4L306.8 241.9L308.1 241.9L309.4 241.2L310.8 241L312.1 241.7L313.4 241L314.7 241.2L316 241.3L317.4 241L318.7 241.6L320 241.6L321.5 242.1L323 241.5L325 238.7L326.5 239.8L328 241.4L329.3 241.1L330.7 240.9L332 241.9L333.3 241.9L334.7 241.7L336 241.5L337.3 240.9L338.7 240.7L340 240.8L341.3 240.5L342.7 241.5L344 241L345.3 241.6L346.7 240.9L348 241.8L349.4 241.6L350.7 240.3L352 240.6L353.4 241.7L354.7 241L356 241.8L357.4 240.9L358.7 240.4L360 241.2L361.4 241.4L362.7 240.7L364 240.4L365.4 240.8L366.7 241.7L368 241.4L369.4 240.4L370.7 240.6L372 240.4L373.4 240.3L374.7 241.4L376 240.5L377.4 241.1L378.7 240.9L380 240.5L381.4 241.3L382.7 240.4L384 241.2L385.3 240.4L386.7 240.8L388 240.5L389.3 240.6L390.7 241.6L392 241.4L393.3 240.6L394.7 241.5L396 240.5L397.3 240.7L398.7 241.4L400 241.1L401.5 239.5L403 239.9L404.3 239.5L405.7 240.4L407 241.9L408.5 241.7L410 242.1L411.5 242.2L413 242.7L414.4 243.3L415.8 242.6L417.2 243L418.6 242.5L420 242.4L421.3 243.1L422.6 242.3L423.9 242.4L425.2 242.7L426.5 241.6L427.8 241.5L429.1 242.6L430.4 242.3L431.7 241.4L433 241.2L434.3 242L435.7 242.2L437 241L438.4 242.1L439.7 241.9L441.1 241.4L442.4 241.1L443.8 240.6L445.1 240.4L446.5 241.7L447.8 240.6L449.2 241.2L450.5 240.5L451.9 241.2L453.2 240.8L454.6 240.3L455.9 240.1L457.3 240.8L458.6 239.8L460 239.9L461.3 240.4L462.7 240.7L464 240.3L465.4 239.7L466.7 240.6L468 239.5L469.4 239.2L470.7 239.6L472 239.8L473.4 239.2L474.7 239.3L476 239.6L477.4 239.9L478.7 239.2L480 239.5L481.4 240.3L482.7 240.4L484 239.9L485.3 239.9L486.7 239.7L488 239L489.3 238.8L490.7 238.8L492 240.1L493.3 239.7L494.7 240.1L496 238.7L497.3 239.6L498.7 239.3L500 239.6L501.3 239L502.6 240L504 238.6L505.3 239.3L506.6 239.5L507.9 239.8L509.2 239.5L510.6 239.4L511.9 239.5L513.2 239.7L514.5 238.8L515.8 239.3L517.2 239.6L518.5 239.5L519.8 238.8L521.1 239.4L522.4 239.4L523.8 239L525.1 239L526.4 238.6L527.7 238.9L529 238.9L530.4 238.1L531.7 238.9L533 239.4L534.4 239.2L535.8 239L537.1 238.5L538.5 239L539.9 238.7L541.2 238.5L542.6 239L544 237.9L545.4 237.6L546.7 235.3L548.4 237.1L550 237.8L551.5 237.1L553 237.6L554.4 237.4L555.7 237.7L557.1 238.2L558.5 237.3L559.9 237.1L561.2 237.6L562.6 238.3L564 237.7L565.3 237.7L566.7 238.9L568 238.6L569.4 238.2L570.7 238.9L572 238.1L573.4 238.6L574.7 237.9L576 238.3L577.4 238.9L578.7 239.1L580 239L581.4 238.3L582.7 238.6L584 238.2L585.3 238L586.7 238.5L588 239.1L589.3 239.1L590.7 238.9L592 239.3L593.3 238.3L594.7 238.1L596 238.6L597.3 238.3L598.7 238.3L600 238.6L601.4 238.8L602.8 238.5L604.2 238.1L605.6 238.8L607 238.9L608.4 238L609.7 237.4L611.1 237.2L612.5 238.4L613.9 237L615.3 237.9L616.7 237.6L618.1 237.3L619.4 238.1L620.8 237.1L622.2 237.4L623.6 238L624.9 237.4L626.3 238.7L627.7 238L629 237.9L630.4 237.9L631.8 238.9L633.1 238.7L634.5 239.1L635.9 239.2L637.3 239.5L638.6 239.9L640 239.6L641.3 238.9L642.6 239.3L644 238.9L645.3 238.7L646.6 239.4L647.9 239.8L649.2 239L650.6 239.2L651.9 239.3L653.2 239.9L654.5 239.6L655.8 239.8L657.2 240L658.5 239.5L659.8 240.2L661.1 240.4L662.4 239.2L663.8 240.5L665.1 240.2L666.4 239.3L667.7 239.8L669 240.1L670.4 240.6L671.7 239.8L673 240.1L674.3 240.6L675.7 240.5L677 240.8L678.4 240.1L679.7 240.4L681.1 239.7L682.4 240.5L683.8 240.7L685.1 240.5L686.5 240.6L687.8 239.9L689.2 240.9L690.5 241.1L691.9 241.1L693.2 240.5L694.6 240.9L695.9 240.2L697.3 241.1L698.6 241.1L700 240.3L701.3 240L702.7 240.5L704 240.7L705.4 241.1L706.7 240.7L708 240L709.4 241.1L710.7 240L712 241L713.4 240.1L714.7 240.3L716 240.9L717.4 239.9L718.7 239.9L720 240.4L721.4 240.7L722.7 240.9L724 240.6L725.3 241L726.7 240.3L728 240.9L729.3 239.6L730.7 239.8L732 240.2L733.3 239.8L734.7 240.5L736 240.3L737.3 240.1L738.7 240.5L740 240.1L741.7 239.6L743.3 239.5L745 240L746.7 237.9L748.4 237.9L750 239.8L751.3 240L752.6 239.3L753.9 239.4L755.2 238.9L756.5 239.4L757.8 239.3L759.1 239.5L760.4 238.6L761.7 240L763 239.3L764.4 239.3L765.7 240L767.1 239.8L768.5 239.8L769.9 240.3L771.2 239.5L772.6 240.3L774 240.3L775.3 241.2L776.7 241.3L778.1 241.1L779.6 242.2L781 242.4L783 245.9L784.3 246L785.7 245.6L787 244.5L788.3 244.2L789.6 244L790.9 244.6L792.2 245.1L793.5 243.8L794.8 244.8L796.1 243.6L797.4 243.9L798.7 243.9L800 244.6L801.3 244.1L802.7 244.1L804 244.5L805.3 243.8L806.7 244.8L808 243.9L809.3 244.5L810.7 244.1L812 244.1L813.3 244.6L814.7 244.5L816 244.4L817.3 244.5L818.7 244.7L820 244.1L821.3 244.2L822.7 244.9L824 244.9L825.3 244.8L826.7 245.3L828 245L829.3 245.3L830.7 244.4L832 245.2L833.3 245.3L834.7 245.5L836 244.7L837.3 244.7L838.7 245.6L840 244.6L841.3 245.7L842.6 245.5L844 244.4L845.3 244.5L846.6 245.2L847.9 244.5L849.2 244.2L850.6 245.3L851.9 244.6L853.2 245.2L854.5 244.1L855.8 244.5L857.2 244.9L858.5 243.9L859.8 244.1L861.1 244.8L862.4 245.1L863.8 245.2L865.1 243.9L866.4 244.4L867.7 244.8L869 244.4L870.4 244.6L871.7 243.9L873 243.7L874.4 243.8L875.8 243.9L877.2 244.8L878.6 244.9L880 245.1L885 244.8L890 246.9L893.8 243.8L894.4 248.8L896.9 238.1L899.4 236.9L903.8 238.8L906.9 241.2L910 245L913.1 248.5L916.2 248.1L918.1 244.4L921.2 242.9L923.1 244.4L926.9 240.6L928.8 243.1L932.5 244.4L934.4 242.5L935.2 264.6L935.6 264.6L936.2 251.2L936.9 211.2L937.8 188.8L938.5 177.5L939.5 176.5L940.3 178L941.2 182.5L942.5 175.6L943.5 179L944.4 177.5L945.6 182.5L946.9 195L948.1 201.2L949.4 208.8L950.6 218.8L952.5 218.1L953.8 221.2L955.6 225L958.1 226.9L958.8 231.2L960.6 233.8L962.5 230L964.5 230.8L966.2 230L968.8 231.2L971.2 237.5L973.8 230.6L976.2 233.1L978.8 237.5L981.2 239L983.8 239.4L986.2 236.2L988.8 234.4L990 228.8L990.4 248.8L990.7 248.8L991.2 226.9L991.9 207.5L992.5 173L993.5 146L994.8 124.4L995.6 108.8L996.6 100L998.2 98.5L1000 100L1000.6 99L1001.2 81.2L1002.3 84.5L1003.5 82L1004.2 83.5L1005 77.5L1006 78.5L1007.2 75.2L1008.4 76.5L1009.4 78.8L1011.2 83L1014.4 92.5L1017.5 105L1021.2 121.2L1025 136.2L1030 155L1036.2 176.2L1040.6 186.2L1043.8 194.4L1047.5 203.1L1051.2 211.2L1055 218.8L1058.8 225L1063.8 231.2L1068.8 237.5L1073.8 242.5L1080 246.9L1086.2 249.8L1092.5 251.9L1098.8 253.1L1103.6 254L1103.8 255.6L1107.8 255.8L1111.9 255.9L1116 256.1L1120 256.1L1124 256.4L1128 256L1132 256.4L1136 256.8L1140 256.8L1144 257L1148 256.6L1152 256.9L1156 256.8L1160 257L1164 257.1L1168 256.9L1172 257L1176 257.1L1180 257.5L1184.2 257.5L1188.3 257.2L1192.5 257.6L1196.7 257.4L1200.8 257.7L1205 257.5L1209.2 257.5L1213.3 258L1217.5 257.7L1221.7 257.7L1225.8 258.2L1230 258.2L1234.2 257.9L1238.3 258.3L1242.5 258.1L1246.7 258.3L1250.8 258.1L1255 258.5L1259.2 258.4L1263.3 258.6L1267.5 258.6L1271.7 258.3L1275.8 258.4L1280 258.3L1284.2 258.3L1288.3 258.3L1292.5 258.5L1296.7 258.7L1300.8 258.4L1305 258.7L1309.2 258.6L1313.3 258.6L1317.5 258.9L1321.7 258.7L1325.8 258.7L1330 258.8L1334 258.9L1338 258.6L1342 259.1L1346 258.6L1350 259L1354 259.1L1358 258.7L1362 259.1L1366 258.9L1370 259L1372 259.1L1374 263.8L1376 268.1L1378 266.7L1383.3 264.1L1390 262.8L1394.5 262.8L1398.9 262.8L1403.3 262.4L1407.8 262.4L1412.2 262.4L1416.7 262.4L1417.5 259.1L1419 260.4L1423.1 260.5L1427.2 260.5L1431.3 260.1L1435.4 260.6L1439.5 260.2L1443.6 260.3L1447.7 260.5L1451.8 260.7L1455.9 260.4L1460 260.7L1464 260.5L1468 260.4L1472 260.5L1476 260.4L1480 260.4L1484 260.4L1488 260.7L1492 260.9L1496 260.5L1500 260.5L1504 261L1508 260.8L1512 260.7L1516 260.6L1520 260.8L1524 261L1528 260.8L1532 260.8L1536 260.7L1540 261.1L1544 260.7L1548 260.9L1552 261.1L1556 260.8L1560 261.1L1564 261.2L1568 261.1L1572 261.2L1576 260.9L1580 261.1L1584 260.9L1588 261.3L1592 261.1L1596 261.2L1600 261.4L1604 261.4L1608 261.5L1612 261.2L1616 261.3L1620 261.4L1624 261.3L1628 261.2L1632 261.3L1636 261.2L1640 261.3L1644 261.6L1648 261.6L1652 261.5L1656 261.4L1660 261.3L1664 261.2L1668 261.3L1672 261.6L1676 261.7L1680 261.4L1684.2 261.7L1688.4 261.7L1692.5 261.6L1696.7 261.6L1700.9 261.7L1705.1 261.5L1709.2 261.7L1713.4 261.5L1717.6 261.6L1721.8 261.8L1725.9 261.7L1730.1 261.5L1734.3 261.9L1738.5 261.7L1742.6 261.7L1746.8 261.4L1751 261.7" stroke="#ffee00" stroke-width="1.25" fill="none" stroke-linejoin="round" shape-rendering="crispEdges"/><path d="M9.8 161.8H77.6L83.6 174.60000000000002L77.6 187.4H9.8Q6.8 187.4 6.8 184.4V164.8Q6.8 161.8 9.8 161.8Z" fill="#1f1d0a" stroke="#f6ee14" stroke-width="1.5" stroke-linejoin="round"/><path d="M33.2 161.8V187.4" stroke="#f6ee14" stroke-width="1.5"/><g fill="#f6ee14" font-size="11" text-anchor="middle"><text x="19.4" y="177.9">C 1</text><text x="57.4" y="177.9">20 V</text></g><path d="M9.8 395.8H77.6L83.6 408.6L77.6 421.4H9.8Q6.8 421.4 6.8 418.4V398.8Q6.8 395.8 9.8 395.8Z" fill="#141a0a" stroke="#8cc63f" stroke-width="1.5" stroke-linejoin="round"/><path d="M33.2 395.8V421.4" stroke="#8cc63f" stroke-width="1.5"/><g fill="#8cc63f" font-size="11" text-anchor="middle"><text x="19.4" y="411.9">C 4</text><text x="56.4" y="411.9">200 mV</text></g><path d="M9.8 722.8H30L42 735.0999999999999L30 747.4H9.8Q6.8 747.4 6.8 744.4V725.8Q6.8 722.8 9.8 722.8Z" fill="#1f1208" stroke="#f7941d" stroke-width="1.5" stroke-linejoin="round"/><text x="23.4" y="738.8" font-size="11.5" fill="#f7941d" text-anchor="middle">M 1</text><path d="M9.8 952.8H30L42 965.0999999999999L30 977.4H9.8Q6.8 977.4 6.8 974.4V955.8Q6.8 952.8 9.8 952.8Z" fill="#6d2c91" stroke="#6d2c91" stroke-width="1.5" stroke-linejoin="round"/><text x="23.4" y="968.8" font-size="11.5" fill="#fff" text-anchor="middle">M 2</text><path d="M45 58H65.2L55.1 67.6Z" fill="#f7941d"/><path d="M46 69H64.2V88H46Z" fill="#000" stroke="#f7941d" stroke-width="2" stroke-linejoin="miter"/><path d="M50.4 88.5H59.8L55.1 96.2Z" fill="#f7941d"/><path d="M52.6 87H57.6L55.1 90.6Z" fill="#000"/><text x="55.1" y="83.6" font-size="12" fill="#f7941d" stroke="#f7941d" stroke-width="0.3" text-anchor="middle">T</text><path d="M1710 65H1742Q1744 65 1744 67V99Z" fill="#4d4d4d"/><circle cx="1737" cy="71.6" r="4" fill="#555" stroke="#a8a8a8" stroke-width="1.3"/><path d="M1734 75L1728 80.6" stroke="#a8a8a8" stroke-width="2.2" stroke-linecap="round"/></svg>
</div></main>
<div style="left:1760px;top:502px;width:4px;height:21px"><div style="left:0;top:0px;width:4px;height:4px;border-radius:2px;background:#cfcfcf"></div><div style="left:0;top:8.5px;width:4px;height:4px;border-radius:2px;background:#cfcfcf"></div><div style="left:0;top:17px;width:4px;height:4px;border-radius:2px;background:#cfcfcf"></div></div>
<aside id="side"><div class="gs">
<span class="dvb" style="left:32.3px;top:-0.1px;font-size:14.6px;line-height:17px;color:#f0f0f0;transform:scaleX(0.956);">Add New...</span>
<button class="btn" style="left:8px;top:24px;width:63px;height:37px"><span style="left:6px;top:8.9px;font-size:14px;line-height:16px;color:#fff;transform:scaleX(1.047);">Cursors</span></button>
<button class="btn" style="left:80px;top:24px;width:63px;height:37px"><span style="left:5.7px;top:8.9px;font-size:14px;line-height:16px;color:#fff;transform:scaleX(1.105);">Callout</span></button>
<button class="btn" style="left:8px;top:70px;width:63px;height:37px"><span style="left:1.4px;top:8.9px;font-size:14px;line-height:16px;color:#fff;transform:scaleX(1.092);">Measure</span></button>
<button class="btn" style="left:80px;top:70px;width:63px;height:37px"><span style="left:7.3px;top:8.9px;font-size:14px;line-height:16px;color:#fff;transform:scaleX(1.057);">Search</span></button>
<button class="btn" style="left:8px;top:116px;width:63px;height:37px"><span style="left:6.8px;top:0.8px;font-size:14px;line-height:16px;color:#fff;transform:scaleX(1.046);">Results</span><span style="left:13.05px;top:16.8px;font-size:14px;line-height:16px;color:#fff;transform:scaleX(1.096);">Table</span></button>
<button class="btn" style="left:80px;top:116px;width:63px;height:37px"><span style="left:16.5px;top:8.8px;font-size:14px;line-height:16px;color:#fff;transform:scaleX(1.175);">Plot</span></button>
<div class="sep" style="left:3px;top:159px;width:144px;height:1px"></div>
<button class="btn" style="left:8px;top:166px;width:63px;height:37px"><svg width="61" height="35" viewBox="1779 197 61 35" style="position:absolute;left:0;top:0"><path d="M1797.1 203.2H1800M1802.9 203.2H1807.5M1810 203.2H1815M1817.5 203.2H1820.8M1797.1 221.8H1800.4M1802.9 221.8H1807.5M1810.4 221.8H1814.6M1798.2 202.1V204.4M1798.2 207.5V210.8M1798.2 214.2V217.1M1798.2 220V222.9M1819.7 202.1V204.4M1819.7 207.5V210.8M1819.7 214.2V217.1" fill="none" stroke="#c6c6c6" stroke-width="2.2"/><circle cx="1810.8" cy="210.8" r="4.6" fill="#303030" stroke="#c6c6c6" stroke-width="1.5"/><path d="M1807.2 214.2L1802.7 217.4" stroke="#c6c6c6" stroke-width="2.6" stroke-linecap="round"/><path d="M1815 217.1L1823.4 221.9L1820 222.7L1822.4 226.5L1820.7 227.4L1818.5 223.7L1816 225.9Z" fill="#c6c6c6" stroke="#2b2b2b" stroke-width="0.7"/></svg></button>
<button class="btn" style="left:80px;top:166px;width:63px;height:37px"><span style="left:5.7px;top:9px;font-size:14px;line-height:16px;color:#fff;transform:scaleX(1.146);">More...</span></button>
<div class="sep" style="left:3px;top:211px;width:144px;height:1px"></div>
</div></aside>
<footer id="bottom"><div class="gs">
<section class="badge" style="left:3px;top:7px;width:90px;height:76px"><header style="background:#4a4621"><span class="dv" style="left:5.4px;top:0.9px;font-size:14px;line-height:16px;color:#ffff38;transform:scaleX(0.881);-webkit-text-stroke:0.35px #ffff38;">Ch 1</span></header><span style="left:5.3px;top:19.9px;font-size:14.6px;line-height:17px;color:#000;transform:scaleX(0.950);-webkit-text-stroke:0.3px currentColor;">5 V/div</span><span style="left:5.8px;top:38.8px;font-size:14.6px;line-height:17px;color:#000;transform:scaleX(1.035);-webkit-text-stroke:0.3px currentColor;">1 MΩ</span><span style="left:4.9px;top:57.6px;font-size:14.6px;line-height:17px;color:#000;transform:scaleX(0.991);-webkit-text-stroke:0.3px currentColor;">200 kHz</span><span class="dvcb" style="left:71.7px;top:56.8px;font-size:9.5px;line-height:11px;color:#000;transform:scaleX(0.920);">B</span><span class="dvcb" style="left:77.2px;top:59.9px;font-size:9.5px;line-height:11px;color:#000;transform:scaleX(0.850);">w</span></section>
<section class="badge off" style="left:98px;top:7px;width:90px;height:76px"><header style="background:#27807f"><span class="dv" style="left:5.6px;top:0.9px;font-size:14px;line-height:16px;color:#141414;transform:scaleX(0.919);-webkit-text-stroke:0.35px #141414;">Ch 2</span></header><span style="left:4.9px;top:19.9px;font-size:14.6px;line-height:17px;color:#262626;transform:scaleX(0.968);-webkit-text-stroke:0.3px currentColor;">250 mV/div</span><span style="left:5.8px;top:38.8px;font-size:14.6px;line-height:17px;color:#262626;transform:scaleX(1.035);-webkit-text-stroke:0.3px currentColor;">1 MΩ</span><span style="left:4.9px;top:57.6px;font-size:14.6px;line-height:17px;color:#262626;transform:scaleX(0.991);-webkit-text-stroke:0.3px currentColor;">200 kHz</span><span class="dvcb" style="left:71.7px;top:56.8px;font-size:9.5px;line-height:11px;color:#262626;transform:scaleX(0.920);">B</span><span class="dvcb" style="left:77.2px;top:59.9px;font-size:9.5px;line-height:11px;color:#262626;transform:scaleX(0.850);">w</span></section>
<section class="badge off" style="left:193px;top:7px;width:90px;height:76px"><header style="background:#8f3a48"><span class="dv" style="left:5.7px;top:0.9px;font-size:14px;line-height:16px;color:#b3b3b3;transform:scaleX(0.916);-webkit-text-stroke:0.35px #b3b3b3;">Ch 3</span></header><span style="left:4.7px;top:19.9px;font-size:14.6px;line-height:17px;color:#262626;transform:scaleX(0.968);-webkit-text-stroke:0.3px currentColor;">450 mV/div</span><span style="left:6px;top:38.8px;font-size:14.6px;line-height:17px;color:#262626;transform:scaleX(1.029);-webkit-text-stroke:0.3px currentColor;">1 MΩ</span><span style="left:4.9px;top:57.6px;font-size:14.6px;line-height:17px;color:#262626;transform:scaleX(0.991);-webkit-text-stroke:0.3px currentColor;">200 kHz</span><span class="dvcb" style="left:71.7px;top:56.8px;font-size:9.5px;line-height:11px;color:#262626;transform:scaleX(0.920);">B</span><span class="dvcb" style="left:77.2px;top:59.9px;font-size:9.5px;line-height:11px;color:#262626;transform:scaleX(0.850);">w</span></section>
<section class="badge" style="left:288px;top:7px;width:90px;height:76px"><header style="background:#3b4520"><span class="dv" style="left:5.6px;top:0.9px;font-size:14px;line-height:16px;color:#8fe22e;transform:scaleX(0.919);-webkit-text-stroke:0.35px #8fe22e;">Ch 4</span></header><span style="left:4.9px;top:19.9px;font-size:14.6px;line-height:17px;color:#000;transform:scaleX(0.968);-webkit-text-stroke:0.3px currentColor;">200 mV/div</span><span style="left:5.8px;top:38.8px;font-size:14.6px;line-height:17px;color:#000;transform:scaleX(1.035);-webkit-text-stroke:0.3px currentColor;">1 MΩ</span><span style="left:4.9px;top:57.6px;font-size:14.6px;line-height:17px;color:#000;transform:scaleX(0.991);-webkit-text-stroke:0.3px currentColor;">200 kHz</span><span class="dvcb" style="left:71.7px;top:56.8px;font-size:9.5px;line-height:11px;color:#000;transform:scaleX(0.920);">B</span><span class="dvcb" style="left:77.2px;top:59.9px;font-size:9.5px;line-height:11px;color:#000;transform:scaleX(0.850);">w</span></section>
<section class="badge" style="left:383px;top:7px;width:90px;height:76px"><header style="background:#4b3521"><span class="dv" style="left:5.6px;top:0.9px;font-size:14px;line-height:16px;color:#ff9d20;transform:scaleX(0.983);-webkit-text-stroke:0.35px #ff9d20;">Math 1</span></header><span style="left:5.3px;top:19.9px;font-size:14.6px;line-height:17px;color:#000;transform:scaleX(0.955);-webkit-text-stroke:0.3px currentColor;">73.4 mT/div</span><span style="left:5.1px;top:38.8px;font-size:14.6px;line-height:17px;color:#000;transform:scaleX(0.973);-webkit-text-stroke:0.3px currentColor;">Intg(Ch2)…</span></section>
<section class="badge" style="left:478px;top:7px;width:90px;height:76px"><header style="background:#6c2c8e"><span class="dv" style="left:5.7px;top:0.9px;font-size:14px;line-height:16px;color:#ffffff;transform:scaleX(0.996);-webkit-text-stroke:0.35px #ffffff;">Math 2</span></header><span style="left:4.7px;top:19.9px;font-size:14.6px;line-height:17px;color:#000;transform:scaleX(0.987);-webkit-text-stroke:0.3px currentColor;">908.27 A/div</span><span style="left:4.7px;top:38.8px;font-size:14.6px;line-height:17px;color:#000;-webkit-text-stroke:0.3px currentColor;">-Intg(Ch3…</span></section>
<button class="btn" style="left:1023px;top:3px;width:40px;height:80px;border-radius:6px"><div class="bar" style="background:#ff9a2a"></div><span style="left:14.3px;top:31.8px;font-size:19px;line-height:22px;color:#fff;transform:scaleX(0.802);">5</span></button>
<button class="btn" style="left:1068px;top:3px;width:40px;height:80px;border-radius:6px"><div class="bar" style="background:#2323d0"></div><span style="left:13.8px;top:31.8px;font-size:19px;line-height:22px;color:#fff;transform:scaleX(0.940);">6</span></button>
<div class="sep" style="left:1118px;top:4px;width:1px;height:80px"></div>
<button class="btn" style="left:1129px;top:3px;width:40px;height:80px;border-radius:6px"><div class="bar" style="background:#b82222"></div><span style="left:5.8px;top:19.7px;font-size:14px;line-height:16px;color:#fff;transform:scaleX(1.076);">Add</span><span style="left:4.6px;top:35.8px;font-size:14px;line-height:16px;color:#fff;transform:scaleX(1.046);">New</span><span style="left:2.5px;top:51.6px;font-size:14px;line-height:16px;color:#fff;transform:scaleX(1.044);">Math</span></button>
<button class="btn" style="left:1174px;top:3px;width:40px;height:80px;border-radius:6px"><div class="bar" style="background:#c2c6e2"></div><span style="left:5.8px;top:19.7px;font-size:14px;line-height:16px;color:#fff;transform:scaleX(1.076);">Add</span><span style="left:4.6px;top:35.8px;font-size:14px;line-height:16px;color:#fff;transform:scaleX(1.046);">New</span><span style="left:9.2px;top:51.6px;font-size:14px;line-height:16px;color:#fff;transform:scaleX(0.973);">Ref</span></button>
<button class="btn" style="left:1219px;top:3px;width:40px;height:80px;border-radius:6px"><div class="bar" style="background:#cc66ff"></div><span style="left:5.8px;top:19.7px;font-size:14px;line-height:16px;color:#fff;transform:scaleX(1.076);">Add</span><span style="left:4.6px;top:35.8px;font-size:14px;line-height:16px;color:#fff;transform:scaleX(1.046);">New</span><span style="left:8.3px;top:51.6px;font-size:14px;line-height:16px;color:#fff;transform:scaleX(0.935);">Bus</span></button>
<div class="sep" style="left:1269px;top:4px;width:1px;height:80px"></div>
<section class="sys" style="left:1280px;top:7px;width:200px;height:77px"><header><span class="dv" style="left:5.7px;top:0.9px;font-size:14px;line-height:16px;color:#fff;transform:scaleX(1.020);">Horizontal</span></header><span style="left:4px;top:18.9px;font-size:14.6px;line-height:17px;color:#000;transform:scaleX(0.941);-webkit-text-stroke:0.3px currentColor;">4 ms/div</span><span style="left:110.3px;top:18.9px;font-size:14.6px;line-height:17px;color:#000;transform:scaleX(0.946);-webkit-text-stroke:0.3px currentColor;">40 ms</span><span style="left:4.4px;top:37.8px;font-size:14.6px;line-height:17px;color:#000;transform:scaleX(0.964);-webkit-text-stroke:0.3px currentColor;">SR: 1 MS/s</span><span style="left:111.5px;top:37.8px;font-size:14.6px;line-height:17px;color:#000;transform:scaleX(0.922);-webkit-text-stroke:0.3px currentColor;">1 µs/pt</span><span style="left:4.4px;top:56.6px;font-size:14.6px;line-height:17px;color:#000;transform:scaleX(0.942);-webkit-text-stroke:0.3px currentColor;">RL: 40 kpts</span><svg width="12" height="14" viewBox="0 0 12 14" style="position:absolute;left:109.20000000000005px;top:58.200000000000045px"><path d="M1.6 1.2H9.4V9.3H7.2L5.5 12.6L3.8 9.3H1.6Z" fill="#000" stroke="#f7941d" stroke-width="1.3"/><text x="5.5" y="8.3" font-family="DejaVu Sans,Liberation Sans,sans-serif" font-weight="700" font-size="7" fill="#fff" text-anchor="middle">T</text></svg><span style="left:124.4px;top:56.6px;font-size:14.6px;line-height:17px;color:#000;transform:scaleX(1.036);-webkit-text-stroke:0.3px currentColor;">3%</span></section>
<section class="sys" style="left:1485px;top:7px;width:160px;height:77px"><header><span class="dv" style="left:5.35px;top:0.9px;font-size:14px;line-height:16px;color:#fff;transform:scaleX(1.006);">Trigger</span></header><div style="left:4px;top:21px;width:30px;height:16px;border:1px solid #000;border-radius:6px;background:#2424c0"><span style="left:9.8px;top:-2px;font-size:13.6px;line-height:16px;color:#fff;">6</span></div><svg width="20" height="14" viewBox="1528 1025 20 14" style="position:absolute;left:42px;top:21px"><path d="M1530 1037.2H1534.6L1542 1027.4H1546" fill="none" stroke="#2e2e86" stroke-width="1.3"/></svg><span style="left:70.3px;top:18.9px;font-size:14.6px;line-height:17px;color:#000;transform:scaleX(0.986);-webkit-text-stroke:0.3px currentColor;">3 V</span></section>
<section class="sys" style="left:1650px;top:7px;width:150px;height:77px"><header><span class="dv" style="left:5.3px;top:0.9px;font-size:14px;line-height:16px;color:#fff;">Acquisition</span></header><span style="left:4.4px;top:18.9px;font-size:14.6px;line-height:17px;color:#000;transform:scaleX(0.988);-webkit-text-stroke:0.3px currentColor;">Manual,</span><span style="left:85.3px;top:18.9px;font-size:14.6px;line-height:17px;color:#000;transform:scaleX(0.949);-webkit-text-stroke:0.3px currentColor;">Analyze</span><span style="left:4.4px;top:37.8px;font-size:14.6px;line-height:17px;color:#000;transform:scaleX(0.958);-webkit-text-stroke:0.3px currentColor;">High Res: 16 bits</span><span style="left:4.4px;top:56.6px;font-size:14.6px;line-height:17px;color:#000;transform:scaleX(0.931);-webkit-text-stroke:0.3px currentColor;">Single: 0 /1</span></section>
<div class="sep" style="left:1811px;top:4px;width:1px;height:80px"></div>
<button style="left:1822px;top:3px;width:90px;height:36px;border:1px solid #6f7a7a;border-radius:6px;background:#ff1f26"><span class="dvb" style="left:17.4px;top:8.6px;font-size:12.2px;line-height:14px;color:#fff;transform:scaleX(0.964);">Preview</span></button>
<div style="left:1822px;top:44px;width:90px;height:38px;border-radius:6px;background:#c9c9c9"><span style="left:2.6px;top:1.7px;font-size:14.2px;line-height:16px;color:#000;transform:scaleX(1.016);-webkit-text-stroke:0.3px currentColor;">06 May 2025</span><span style="left:8.4px;top:18.7px;font-size:14.2px;line-height:16px;color:#000;transform:scaleX(1.019);-webkit-text-stroke:0.3px currentColor;">5:34:13 PM</span></div>
</div></footer>
</body></html>
